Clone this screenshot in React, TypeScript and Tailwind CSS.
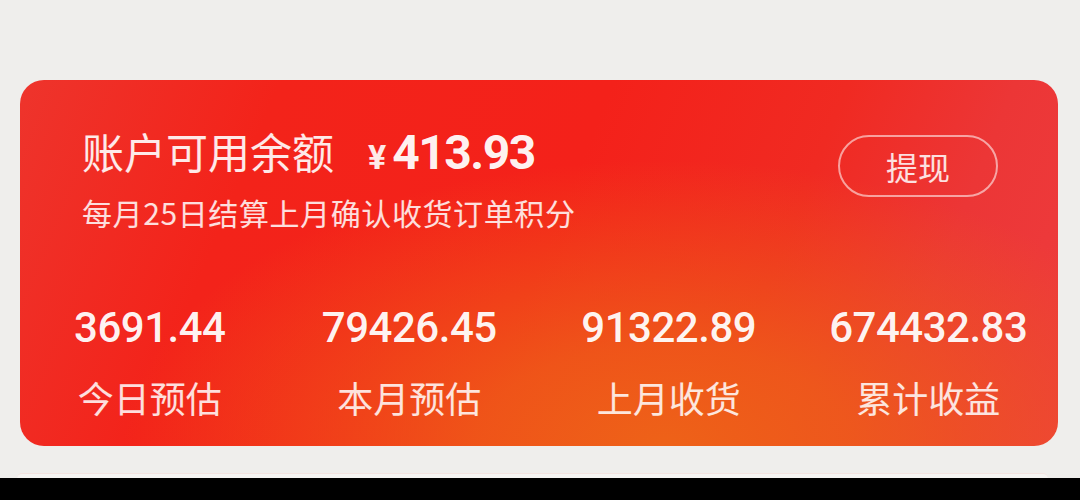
import React from "react";

const stats = [
  { value: "3691.44", label: "今日预估" },
  { value: "79426.45", label: "本月预估" },
  { value: "91322.89", label: "上月收货" },
  { value: "674432.83", label: "累计收益" },
];

export default function App() {
  return (
    <div className="w-[1080px] h-[500px] bg-[#efeeec] flex flex-col overflow-hidden font-['Noto_Sans_CJK_SC',sans-serif]">
      <div className="pt-[80px] pl-[20px] pr-[22px]">
        <div className="relative h-[366px] rounded-[24px] overflow-hidden bg-[radial-gradient(ellipse_52%_78%_at_62%_100%,#ee6218_0%,rgba(238,96,24,0.8)_35%,rgba(240,60,30,0)_100%),linear-gradient(112deg,#ee342c_0%,#f3231a_22%,#f4211a_50%,#f02a22_70%,#ec3636_84%,#ee3c3e_100%)]">
          <div className="flex justify-between pt-[47px] pl-[62px] pr-[60px]">
            <div className="flex flex-col">
              <div className="flex items-baseline">
                <span className="text-[42px] leading-[48px] text-white/90">账户可用余额</span>
                <span className="ml-[34px] text-[34px] font-bold text-white/90 font-['Roboto',sans-serif]">¥</span>
                <span className="ml-[6px] text-[48px] leading-[48px] font-bold tracking-[-1.5px] text-white/95 font-['Roboto',sans-serif]">413.93</span>
              </div>
              <div className="mt-[11px] text-[30px] leading-[36px] tracking-[0.6px] text-white/85">每月25日结算上月确认收货订单积分</div>
            </div>
            <button className="mt-[8px] w-[160px] h-[62px] rounded-full border-2 border-white/55 flex items-center justify-center text-[32px] text-white/85">提现</button>
          </div>
          <div className="grid grid-cols-4 mt-[74px]">
            {stats.map((s) => (
              <div key={s.label} className="flex flex-col items-center">
                <div className="text-[42px] leading-[48px] font-medium tracking-[-0.5px] text-white/95 font-['Roboto',sans-serif]">{s.value}</div>
                <div className="mt-[24px] text-[36px] leading-[42px] text-white/85">{s.label}</div>
              </div>
            ))}
          </div>
        </div>
      </div>
      <div className="mt-[27px] ml-[17px] mr-[32px] h-[5px] rounded-t-[16px] bg-[#f6f5f3] border-t border-[#f3e3e0]"></div>
      <div className="flex-1 bg-black"></div>
    </div>
  );
}
